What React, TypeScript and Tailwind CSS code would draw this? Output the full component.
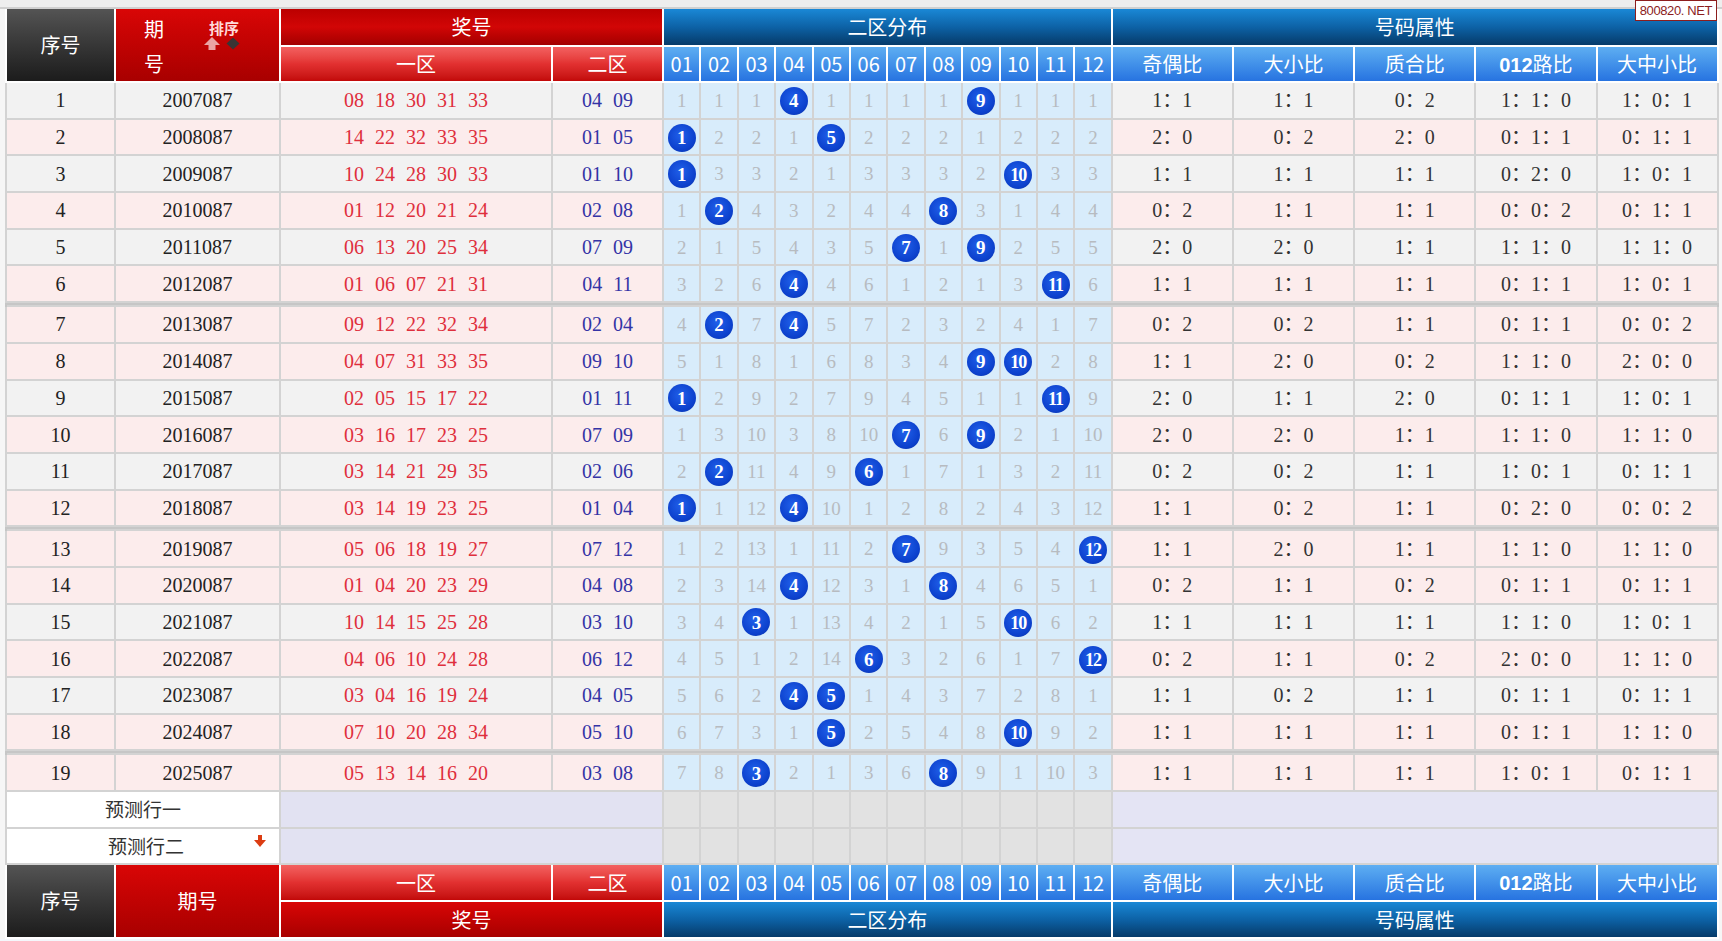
import React from 'react';

type Draw = [string, string, string, string];

const DATA: Draw[] = [
  ['2007087', '08 18 30 31 33', '04 09', '1:1 1:1 0:2 1:1:0 1:0:1'],
  ['2008087', '14 22 32 33 35', '01 05', '2:0 0:2 2:0 0:1:1 0:1:1'],
  ['2009087', '10 24 28 30 33', '01 10', '1:1 1:1 1:1 0:2:0 1:0:1'],
  ['2010087', '01 12 20 21 24', '02 08', '0:2 1:1 1:1 0:0:2 0:1:1'],
  ['2011087', '06 13 20 25 34', '07 09', '2:0 2:0 1:1 1:1:0 1:1:0'],
  ['2012087', '01 06 07 21 31', '04 11', '1:1 1:1 1:1 0:1:1 1:0:1'],
  ['2013087', '09 12 22 32 34', '02 04', '0:2 0:2 1:1 0:1:1 0:0:2'],
  ['2014087', '04 07 31 33 35', '09 10', '1:1 2:0 0:2 1:1:0 2:0:0'],
  ['2015087', '02 05 15 17 22', '01 11', '2:0 1:1 2:0 0:1:1 1:0:1'],
  ['2016087', '03 16 17 23 25', '07 09', '2:0 2:0 1:1 1:1:0 1:1:0'],
  ['2017087', '03 14 21 29 35', '02 06', '0:2 0:2 1:1 1:0:1 0:1:1'],
  ['2018087', '03 14 19 23 25', '01 04', '1:1 0:2 1:1 0:2:0 0:0:2'],
  ['2019087', '05 06 18 19 27', '07 12', '1:1 2:0 1:1 1:1:0 1:1:0'],
  ['2020087', '01 04 20 23 29', '04 08', '0:2 1:1 0:2 0:1:1 0:1:1'],
  ['2021087', '10 14 15 25 28', '03 10', '1:1 1:1 1:1 1:1:0 1:0:1'],
  ['2022087', '04 06 10 24 28', '06 12', '0:2 1:1 0:2 2:0:0 1:1:0'],
  ['2023087', '03 04 16 19 24', '04 05', '1:1 0:2 1:1 0:1:1 0:1:1'],
  ['2024087', '07 10 20 28 34', '05 10', '1:1 1:1 1:1 0:1:1 1:1:0'],
  ['2025087', '05 13 14 16 20', '03 08', '1:1 1:1 1:1 1:0:1 0:1:1'],
];

const NUMS = ['01', '02', '03', '04', '05', '06', '07', '08', '09', '10', '11', '12'];
const GRAY_ROWS = [1, 3, 5, 9, 11, 15, 17];
const BREAK_AFTER = [6, 12, 18];

// miss counts for the twelve back-zone numbers, row by row
const missing = (() => {
  const run = Array(12).fill(0);
  return DATA.map(([, , back]) => {
    const hits = back.split(' ').map(Number);
    return run.map((_, i) => {
      if (hits.includes(i + 1)) {
        run[i] = 0;
        return { hit: true, v: i + 1 };
      }
      run[i] += 1;
      return { hit: false, v: run[i] };
    });
  });
})();

const cell = "border-2 border-[#d3d3d3] text-center align-middle p-0";
const head = "border-2 border-white text-center align-middle p-0 font-normal text-white text-[20px] font-['Noto_Sans_CJK_SC',sans-serif]";
const darkHead = "bg-linear-to-b from-[#545454] to-[#1c1c1c]";
const redHead = "bg-linear-to-b from-[#d90606] to-[#a80000]";
const deepRed = "bg-linear-to-b from-[#bb0000] via-[#d20606] to-[#a30000]";
const lightRed = "bg-linear-to-b from-[#f36060] via-[#e23030] to-[#c20808]";
const deepBlue = "bg-linear-to-b from-[#1a88d6] via-[#0d62a6] to-[#063b6a]";
const lightBlue = "bg-linear-to-b from-[#5eaef2] to-[#2773e0]";

const Ball: React.FC<{ n: number }> = ({ n }) => (
  <span
    className={`inline-flex items-center justify-center w-[28px] h-[28px] rounded-full bg-[radial-gradient(circle_at_45%_40%,#2060ea_0%,#0c40cc_65%,#0a2f98_100%)] text-white font-bold leading-none font-['Liberation_Serif',serif] ${n > 9 ? 'text-[18px] tracking-[-1px]' : 'text-[19px]'}`}
  >
    {n}
  </span>
);

const SortIcons = () => (
  <svg width="42" height="15" viewBox="0 0 42 15">
    <path d="M9 1 L17 9 L12.5 9 L12.5 14 L5.5 14 L5.5 9 L1 9 Z" fill="#eaa3a3" />
    <path d="M30 1.5 L36.5 7.5 L30 13.5 L23.5 7.5 Z" fill="#3a3434" />
  </svg>
);

const DownArrow = () => (
  <svg width="14" height="14" viewBox="0 0 14 14">
    <rect x="5" y="1" width="4" height="6" fill="#dc3d12" />
    <path d="M1 6 L13 6 L7 13 Z" fill="#dc3d12" />
  </svg>
);

const HeaderNums = () => (
  <>
    {NUMS.map((n) => (
      <th key={n} className={`${head} ${lightBlue} font-['Liberation_Sans',sans-serif] font-bold`}>
        {n}
      </th>
    ))}
    <th className={`${head} ${lightBlue}`}>奇偶比</th>
    <th className={`${head} ${lightBlue}`}>大小比</th>
    <th className={`${head} ${lightBlue}`}>质合比</th>
    <th className={`${head} ${lightBlue}`}>
      <span className="font-bold font-['Liberation_Sans',sans-serif]">012</span>路比
    </th>
    <th className={`${head} ${lightBlue}`}>大中小比</th>
  </>
);

export default function App() {
  return (
    <div className="relative min-h-screen bg-[#f4f7fb] font-['Liberation_Serif','Noto_Sans_CJK_SC',serif]">
      <div className="h-[7px] bg-[#eeeeee]" />
      <div className="border-t-2 border-[#d0d0d0] bg-[#f6f6f6] pl-[5px]">
        <table className="table-fixed border-collapse w-[1712px]">
          <colgroup>
            <col className="w-[109px]" />
            <col className="w-[165px]" />
            <col className="w-[272px]" />
            <col className="w-[111px]" />
            {NUMS.map((n) => (
              <col key={n} className="w-[37.4px]" />
            ))}
            <col className="w-[121.2px]" />
            <col className="w-[121.2px]" />
            <col className="w-[121.2px]" />
            <col className="w-[121.2px]" />
            <col className="w-[121.2px]" />
          </colgroup>

          <thead>
            <tr className="h-[37px]">
              <th rowSpan={2} className={`${head} ${darkHead} border-t-0`}>序号</th>
              <th rowSpan={2} className={`${head} ${redHead} border-t-0`}>
                <div className="flex items-start pl-[28px] gap-[39px] h-[71px] overflow-hidden">
                  <div className="flex flex-col leading-[35px] text-left pt-[1px]">
                    <span>期</span>
                    <span>号</span>
                  </div>
                  <div className="flex flex-col items-center pt-[10px] gap-[1px]">
                    <span className="text-[15px] font-bold leading-none text-[#ffdada]">排序</span>
                    <SortIcons />
                  </div>
                </div>
              </th>
              <th colSpan={2} className={`${head} ${deepRed} border-t-0`}>奖号</th>
              <th colSpan={12} className={`${head} ${deepBlue} border-t-0`}>二区分布</th>
              <th colSpan={5} className={`${head} ${deepBlue} border-t-0`}>号码属性</th>
            </tr>
            <tr className="h-[36px]">
              <th className={`${head} ${lightRed}`}>一区</th>
              <th className={`${head} ${lightRed}`}>二区</th>
              <HeaderNums />
            </tr>
          </thead>

          <tbody className="text-[20px] text-[#222]">
            {DATA.map(([issue, front, back, attrs], i) => {
              const no = i + 1;
              const bg = GRAY_ROWS.includes(no) ? 'bg-[#f2f2f2]' : 'bg-[#fcecec]';
              return (
                <React.Fragment key={issue}>
                  <tr className={`h-[36.7px] ${bg}`}>
                    <td className={cell}>{no}</td>
                    <td className={cell}>{issue}</td>
                    <td className={`${cell} text-[#df2f3d]`}>
                      <div className="flex justify-center gap-[11px]">
                        {front.split(' ').map((f, k) => (
                          <span key={k}>{f}</span>
                        ))}
                      </div>
                    </td>
                    <td className={`${cell} text-[#3434a6]`}>
                      <div className="flex justify-center gap-[11px]">
                        {back.split(' ').map((b, k) => (
                          <span key={k}>{b}</span>
                        ))}
                      </div>
                    </td>
                    {missing[i].map((m, k) => (
                      <td key={k} className={`${cell} bg-[#d8ecfb]`}>
                        {m.hit ? (
                          <Ball n={m.v} />
                        ) : (
                          <span className="text-[19px] text-[#b7bbc0]">{m.v}</span>
                        )}
                      </td>
                    ))}
                    {attrs.split(' ').map((a, k) => (
                      <td key={k} className={`${cell} text-[#333]`}>
                        {a.split(':').join('：')}
                      </td>
                    ))}
                  </tr>
                  {BREAK_AFTER.includes(no) && (
                    <tr className="h-[4px]">
                      <td colSpan={21} className="p-0 bg-[#c6c6c6] border-x-2 border-[#c6c6c6]" />
                    </tr>
                  )}
                </React.Fragment>
              );
            })}

            {['预测行一', '预测行二'].map((label, r) => (
              <tr key={label} className="h-[36.5px]">
                <td colSpan={2} className={`${cell} bg-white text-[#333] font-['Noto_Sans_CJK_SC',sans-serif] text-[19px]`}>
                  <div className="flex items-center justify-center relative">
                    <span className={r === 1 ? 'pl-[6px]' : ''}>{label}</span>
                    {r === 1 && (
                      <span className="absolute right-[12px] top-[2px]">
                        <DownArrow />
                      </span>
                    )}
                  </div>
                </td>
                <td colSpan={2} className={`${cell} bg-[#e2e2f2]`} />
                {NUMS.map((n) => (
                  <td key={n} className={`${cell} bg-[#e2e2e2]`} />
                ))}
                <td colSpan={5} className={`${cell} bg-[#e4e4f4]`} />
              </tr>
            ))}
          </tbody>

          <tfoot>
            <tr className="h-[37px]">
              <th rowSpan={2} className={`${head} ${darkHead}`}>序号</th>
              <th rowSpan={2} className={`${head} ${redHead}`}>期号</th>
              <th className={`${head} ${lightRed}`}>一区</th>
              <th className={`${head} ${lightRed}`}>二区</th>
              <HeaderNums />
            </tr>
            <tr className="h-[37px]">
              <th colSpan={2} className={`${head} ${redHead}`}>奖号</th>
              <th colSpan={12} className={`${head} ${deepBlue}`}>二区分布</th>
              <th colSpan={5} className={`${head} ${deepBlue}`}>号码属性</th>
            </tr>
          </tfoot>
        </table>
      </div>

      <div className="absolute top-0 right-[5px] h-[21px] px-[4px] flex items-center bg-white border border-[#8c1d1d] text-[#8c1d1d] text-[13px] font-['Liberation_Sans',sans-serif] tracking-[-0.4px]">
        800820. NET
      </div>
    </div>
  );
}
